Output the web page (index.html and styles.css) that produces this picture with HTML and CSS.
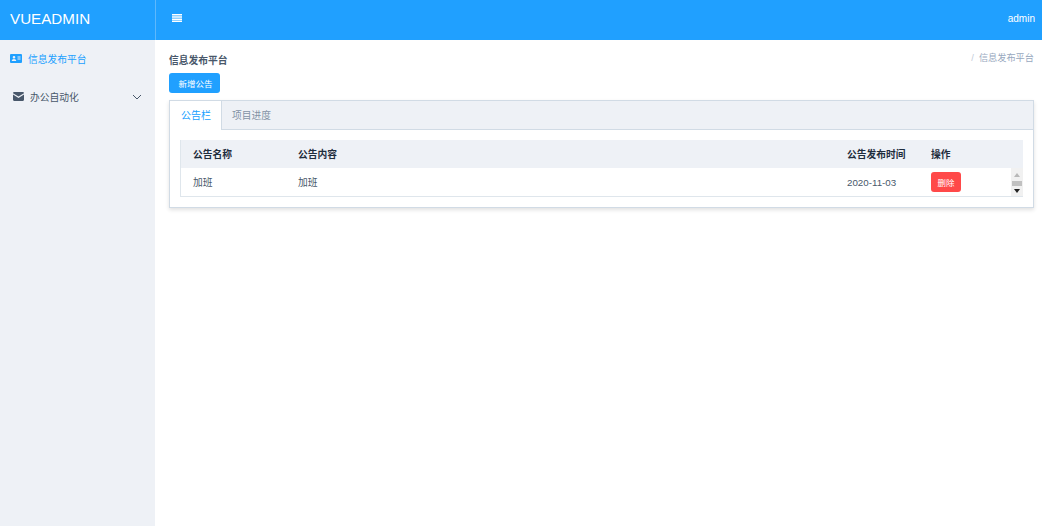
FILE: index.html
```html
<!DOCTYPE html>
<html lang="zh">
<head>
<meta charset="utf-8">
<title>VUEADMIN</title>
<link rel="stylesheet" href="styles.css">
</head>
<body>
<header class="topbar">
  <div class="logo">VUEADMIN</div>
  <div class="topbar-main">
    <svg class="menu-icon" width="10" height="8" viewBox="0 0 10 8"><path d="M0 0h10v1.500H0zM0 2.200h10v1.500H0zM0 4.400h10v1.500H0zM0 6.600h10V8H0z" fill="#fff"/></svg>
    <span class="user">admin</span>
  </div>
</header>
<div class="body-row">
  <aside class="sidebar">
    <div class="side-item active">
      <svg class="icon-card" width="12" height="9" viewBox="0 0 12 9"><path fill="#20a0ff" fill-rule="evenodd" d="M1 0h10a1 1 0 0 1 1 1v7a1 1 0 0 1-1 1H1a1 1 0 0 1-1-1V1a1 1 0 0 1 1-1zM4 2a1.200 1.200 0 1 0 0 2.600A1.200 1.200 0 0 0 4 2zM1.800 7h4.400c0-1.200-1-1.900-2.200-1.900S1.800 5.800 1.800 7zM7.500 2.500v1h3v-1zM7.500 4.500v1h3v-1z"/></svg>
      <span>信息发布平台</span>
    </div>
    <div class="side-item sub">
      <svg class="icon-mail" width="11" height="9" viewBox="0 0 10 8"><path fill="#48576a" d="M1 0h8a1 1 0 0 1 1 1L5 4 0 1a1 1 0 0 1 1-1zM0 2.200 5 5.300l5-3.100V7a1 1 0 0 1-1 1H1a1 1 0 0 1-1-1z"/></svg>
      <span class="sub-label">办公自动化</span>
      <svg class="chev" width="10" height="6" viewBox="0 0 10 6"><path d="M1 1l4 4 4-4" fill="none" stroke="#48576a" stroke-width="1"/></svg>
    </div>
  </aside>
  <main class="content">
    <div class="title-row">
      <strong class="page-title">信息发布平台</strong>
      <span class="crumb"><i class="sep">/</i>信息发布平台</span>
    </div>
    <button class="btn-add">新增公告</button>
    <section class="tabs">
      <div class="tab-head">
        <div class="tab on">公告栏</div>
        <div class="tab">项目进度</div>
      </div>
      <div class="tab-body">
        <div class="table">
          <div class="row head">
            <div class="c1">公告名称</div>
            <div class="c2">公告内容</div>
            <div class="c3">公告发布时间</div>
            <div class="c4">操作</div>
          </div>
          <div class="row data">
            <div class="c1">加班</div>
            <div class="c2">加班</div>
            <div class="c3">2020-11-03</div>
            <div class="c4"><button class="btn-del">删除</button></div>
            <div class="scroll">
              <svg width="6" height="4" viewBox="0 0 6 4"><path d="M3 0l3 4H0z" fill="#b8b8b8"/></svg>
              <div class="thumb"></div>
              <svg width="6" height="4" viewBox="0 0 6 4"><path d="M0 0h6L3 4z" fill="#222"/></svg>
            </div>
          </div>
        </div>
      </div>
    </section>
  </main>
</div>
</body>
</html>
```
FILE: styles.css
```css
* { box-sizing: border-box; }
html, body { margin: 0; height: 100%; }
body {
  font-family: "Liberation Sans", "Noto Sans CJK SC", sans-serif;
  font-size: 10px;
  color: #48576a;
  background: #fff;
  display: flex;
  flex-direction: column;
  height: 526px;
  overflow: hidden;
}
.topbar { display: flex; height: 40px; background: #20a0ff; color: #fff; flex: none; }
.logo {
  width: 156px;
  padding-left: 10px;
  font-size: 15.2px;
  line-height: 37px;
  border-right: 1px solid rgba(238,241,246,.3);
}
.topbar-main { flex: 1; display: flex; align-items: center; justify-content: space-between; padding: 0 7px 4px 16px; }
.menu-icon { display: block; margin-top: -1px; }
.user { font-size: 10px; margin-top: 1px; }
.body-row { flex: 1; display: flex; min-height: 0; }
.sidebar { width: 155px; background: #eef1f6; flex: none; }
.side-item { display: flex; align-items: center; font-size: 9.75px; }
.side-item.active { height: 37px; padding-left: 10px; color: #20a0ff; gap: 6px; }
.side-item.sub { height: 39px; padding: 0 13px; gap: 6px; }
.sub-label { flex: 1; }
.content { flex: 1; padding: 12px 8px 0 14px; min-width: 0; }
.title-row { display: flex; justify-content: space-between; align-items: flex-start; height: 12px; }
.page-title { font-size: 9.75px; font-weight: 700; margin-top: 2px; line-height: 14px; }
.crumb { font-size: 9.2px; line-height: 13px; color: #97a8be; }
.sep { font-style: normal; color: #bfcbd9; margin-right: 5px; }
.btn-add {
  display: block;
  margin: 9px 0 7px;
  width: 51px;
  height: 20px;
  border: 0;
  border-radius: 3px;
  background: #20a0ff;
  color: #fff;
  font: inherit;
  font-size: 8.5px;
  padding: 0 0 0 2px;
}
.tabs {
  width: 865px;
  height: 108px;
  border: 1px solid #d1dbe5;
  background: #fff;
  box-shadow: 0 2px 4px rgba(0,0,0,.12);
}
.tab-head { display: flex; height: 29px; background: #eef1f6; border-bottom: 1px solid #d1dbe5; }
.tab { padding: 0 10px; font-size: 9.75px; line-height: 29px; color: #8391a5; }
.tab.on { background: #fff; color: #20a0ff; height: 29px; padding: 0 10px 0 11px; border-right: 1px solid #d1dbe5; font-size: 10px; }
.tab-body { padding: 10px 10px 0 10px; }
.table { border-bottom: 1px solid #dfe6ec; border-left: 1px solid #dfe6ec; }
.row { display: flex; align-items: center; position: relative; font-size: 9.75px; }
.row.head { height: 28px; background: #eef1f6; font-weight: 700; color: #1f2d3d; }
.row.data { height: 28px; }
.c1 { width: 117px; padding-left: 12px; flex: none; }
.c2 { width: 549px; padding-left: 0; flex: none; }
.c3 { width: 84px; flex: none; }
.c4 { flex: 1; }
.btn-del {
  display: block;
  width: 30px;
  height: 20px;
  border: 0;
  border-radius: 3px;
  background: #ff4949;
  color: #fff;
  font: inherit;
  font-size: 8.5px;
  padding: 0;
}
.scroll {
  position: absolute;
  right: 0;
  top: 0;
  bottom: 0;
  width: 12px;
  background: #f1f1f1;
  display: flex;
  flex-direction: column;
  align-items: center;
  justify-content: space-between;
  padding: 5px 0 3px;
}
.thumb { width: 10px; height: 5px; background: #c1c1c1; }
```
